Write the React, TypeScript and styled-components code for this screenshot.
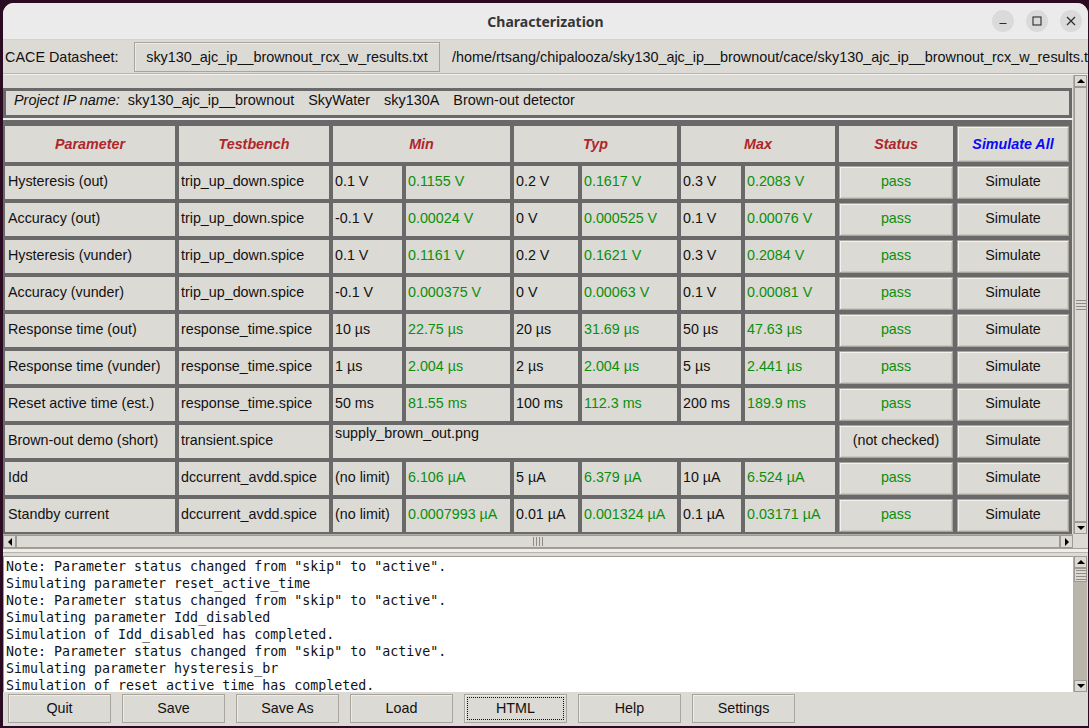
import React from "react";
import styled, { createGlobalStyle, css } from "styled-components";

const Global = createGlobalStyle`
  html, body { margin: 0; padding: 0; background: #2a0b21; }
  body {
    width: 1089px; height: 728px; overflow: hidden;
    font-family: "Liberation Sans", Arial, sans-serif;
  }
  #root { width: 1089px; height: 728px; }
`;

const Window = styled.div`
  margin: 3px 0 0 3px;
  width: 1085px;
  height: 723px;
  border-radius: 11px 11px 0 0;
  overflow: hidden;
  display: flex;
  flex-direction: column;
  background: #dcdad5;
`;

const TitleBar = styled.div`
  flex: 0 0 37px;
  box-sizing: border-box;
  display: grid;
  grid-template-columns: 1fr auto 1fr;
  align-items: center;
  background: #ebebeb;
  border-bottom: 1px solid #d2d2d2;
`;

const Title = styled.div`
  grid-column: 2;
  font-family: "Noto Sans", "DejaVu Sans", sans-serif;
  font-weight: 700;
  font-size: 14px;
  color: #363636;
  padding-top: 1px;
`;

const Controls = styled.div`
  grid-column: 3;
  justify-self: end;
  display: flex;
  gap: 12px;
  padding-right: 6px;
`;

const CtlBtn = styled.div`
  width: 22px;
  height: 22px;
  border-radius: 50%;
  background: #dadada;
  display: flex;
  align-items: center;
  justify-content: center;
`;

const DatasheetRow = styled.div`
  flex: 0 0 33px;
  display: flex;
  align-items: center;
  padding-left: 2px;
  font-size: 14.4px;
  color: #111;
  white-space: nowrap;
  overflow: hidden;
`;

const RowLabel = styled.div`
  flex: 0 0 129px;
`;

const FileButton = styled.div`
  flex: 0 0 306px;
  height: 30px;
  box-sizing: border-box;
  border: 1px solid #a9a59d;
  box-shadow: inset 1px 1px 0 #eeebe7;
  display: flex;
  align-items: center;
  justify-content: center;
  margin-right: 12px;
`;

const PathText = styled.div`
  flex: 1;
  overflow: hidden;
`;

const Rule = styled.div`
  flex: 0 0 2px;
  border-top: 1px solid #b9b6b0;
  box-sizing: border-box;
  background: #f2f1ef;
`;

const TableArea = styled.div`
  flex: 0 0 473px;
  min-height: 0;
  display: grid;
  grid-template-columns: 1070px 14px;
  grid-template-rows: 459px 14px;
`;

const Viewport = styled.div`
  overflow: hidden;
  display: flex;
  flex-direction: column;
  padding-top: 13px;
  box-sizing: border-box;
`;

const ProjectBox = styled.div`
  flex: 0 0 30px;
  width: 1069px;
  box-sizing: border-box;
  border: 3px solid #696969;
  display: flex;
  align-items: flex-start;
  padding: 1px 0 0 8px;
  font-size: 14.4px;
  color: #111;
  white-space: nowrap;
`;

const ProjLabel = styled.span`
  font-style: italic;
  margin-right: 8px;
`;

const ProjItem = styled.span`
  margin-right: 14px;
`;

const LightGap = styled.div`
  flex: 0 0 2px;
  background: #f0efec;
`;

const Grid = styled.div`
  width: 1069px;
  box-sizing: border-box;
  background: #696969;
  padding: 6px 3px 2px 2px;
  display: grid;
  grid-template-columns: 170px 150px 69px 104px 64px 95px 60px 90px 114px 112px;
  grid-template-rows: 36px repeat(10, 33px);
  gap: 4px;
`;

const Cell = styled.div<{ $span?: number; $center?: boolean; $top?: boolean; $tone?: "ok" | "head" | "all" }>`
  background: #dcdad5;
  box-sizing: border-box;
  display: flex;
  align-items: ${(p) => (p.$top ? "flex-start" : "center")};
  justify-content: ${(p) => (p.$center ? "center" : "flex-start")};
  padding-left: ${(p) => (p.$center ? "0" : "2px")};
  padding-bottom: ${(p) => (p.$top || p.$tone === "head" || p.$tone === "all" ? "0" : "3px")};
  font-size: 14.3px;
  color: #111;
  white-space: nowrap;
  overflow: hidden;
  ${(p) => p.$span && css`grid-column: span ${p.$span};`}
  ${(p) => p.$tone === "ok" && css`color: #0b8f0b;`}
  ${(p) =>
    p.$tone === "head" &&
    css`
      color: #b0262a;
      font-weight: 700;
      font-style: italic;
    `}
  ${(p) =>
    p.$tone === "all" &&
    css`
      color: #0a0af5;
      font-weight: 700;
      font-style: italic;
    `}
`;

const FirstCell = styled(Cell)`
  padding-left: 3px;
`;

const BtnCell = styled(Cell)`
  border: 1px solid #a9a59d;
  box-shadow: inset 1px 1px 0 #f3f2ef, inset -1px -1px 0 #c9c6bf;
`;

const VBar = styled.div<{ $trough?: string }>`
  display: flex;
  flex-direction: column;
  min-height: 0;
  background: ${(p) => p.$trough || "#dcdad5"};
  border-left: 1px solid #b3afa7;
  box-sizing: border-box;
`;

const HBar = styled.div`
  display: flex;
  background: #dcdad5;
  border-top: 1px solid #b3afa7;
  box-sizing: border-box;
`;

const ArrowBox = styled.div<{ $horiz?: boolean }>`
  flex: 0 0 ${(p) => (p.$horiz ? "13px" : "12px")};
  box-sizing: border-box;
  border: 1px solid #9e9a91;
  background: #dcdad5;
  display: flex;
  align-items: center;
  justify-content: center;
`;

const Thumb = styled.div<{ $size?: number; $horiz?: boolean }>`
  flex: ${(p) => (p.$size ? `0 0 ${p.$size}px` : "1")};
  box-sizing: border-box;
  border: 1px solid #9e9a91;
  background: #dcdad5;
  display: flex;
  flex-direction: ${(p) => (p.$horiz ? "row" : "column")};
  align-items: center;
  justify-content: center;
  gap: 2px;
`;

const Trough = styled.div`
  flex: 1;
`;

const GripLine = styled.div<{ $horiz?: boolean }>`
  ${(p) =>
    p.$horiz
      ? css`
          width: 1px;
          height: 9px;
        `
      : css`
          width: 10px;
          height: 1px;
        `}
  background: #8f8b84;
`;

const Corner = styled.div`
  background: #dcdad5;
`;

const Separator = styled.div`
  flex: 0 0 8px;
  box-sizing: border-box;
  border-top: 1px solid #a4a098;
  background: linear-gradient(#eeedea 0 3px, #b9b5ae 3px 4px, #dcdad5 4px);
`;

const ConsoleArea = styled.div`
  flex: 0 0 136px;
  min-height: 0;
  overflow: hidden;
  display: grid;
  grid-template-columns: 1070px 14px;
  grid-template-rows: 136px;
`;

const ConsoleText = styled.pre`
  margin: 0;
  min-height: 0;
  background: #ffffff;
  border-top: 1px solid #9e9a91;
  border-left: 1px solid #9e9a91;
  box-sizing: border-box;
  padding: 1px 0 0 2px;
  font-family: "DejaVu Sans Mono", "Liberation Mono", monospace;
  font-size: 13.3px;
  line-height: 17px;
  color: #111;
  overflow: hidden;
`;

const ButtonRow = styled.div`
  flex: 1;
  display: flex;
  gap: 11px;
  padding: 2px 0 0 5px;
`;

const PushButton = styled.div<{ $focus?: boolean }>`
  width: 103px;
  height: 29px;
  box-sizing: border-box;
  border: 1px solid #a9a59d;
  box-shadow: inset 1px 1px 0 #eeebe7;
  display: flex;
  align-items: center;
  justify-content: center;
  padding-bottom: 2px;
  font-size: 14.3px;
  color: #111;
  ${(p) =>
    p.$focus &&
    css`
      outline: 1px dotted #111;
      outline-offset: -4px;
    `}
`;

const Tri = ({ dir }: { dir: "up" | "down" | "left" | "right" }) => {
  const pts =
    dir === "up"
      ? "0,5 4,1 8,5"
      : dir === "down"
      ? "0,1 8,1 4,5"
      : dir === "left"
      ? "5,0 5,8 1,4"
      : "1,0 1,8 5,4";
  const w = dir === "up" || dir === "down" ? 8 : 6;
  const h = dir === "up" || dir === "down" ? 6 : 8;
  return (
    <svg width={w} height={h} viewBox={`0 0 ${w} ${h}`}>
      <polygon points={pts} fill="#000" />
    </svg>
  );
};

const Grip = ({ horiz }: { horiz?: boolean }) => (
  <>
    <GripLine $horiz={horiz} />
    <GripLine $horiz={horiz} />
    <GripLine $horiz={horiz} />
    <GripLine $horiz={horiz} />
  </>
);

type Row = {
  name: string;
  tb: string;
  vals?: string[];
  span?: string;
  status: string;
};

const rows: Row[] = [
  { name: "Hysteresis (out)", tb: "trip_up_down.spice", vals: ["0.1 V", "0.1155 V", "0.2 V", "0.1617 V", "0.3 V", "0.2083 V"], status: "pass" },
  { name: "Accuracy (out)", tb: "trip_up_down.spice", vals: ["-0.1 V", "0.00024 V", "0 V", "0.000525 V", "0.1 V", "0.00076 V"], status: "pass" },
  { name: "Hysteresis (vunder)", tb: "trip_up_down.spice", vals: ["0.1 V", "0.1161 V", "0.2 V", "0.1621 V", "0.3 V", "0.2084 V"], status: "pass" },
  { name: "Accuracy (vunder)", tb: "trip_up_down.spice", vals: ["-0.1 V", "0.000375 V", "0 V", "0.00063 V", "0.1 V", "0.00081 V"], status: "pass" },
  { name: "Response time (out)", tb: "response_time.spice", vals: ["10 µs", "22.75 µs", "20 µs", "31.69 µs", "50 µs", "47.63 µs"], status: "pass" },
  { name: "Response time (vunder)", tb: "response_time.spice", vals: ["1 µs", "2.004 µs", "2 µs", "2.004 µs", "5 µs", "2.441 µs"], status: "pass" },
  { name: "Reset active time (est.)", tb: "response_time.spice", vals: ["50 ms", "81.55 ms", "100 ms", "112.3 ms", "200 ms", "189.9 ms"], status: "pass" },
  { name: "Brown-out demo (short)", tb: "transient.spice", span: "supply_brown_out.png", status: "(not checked)" },
  { name: "Idd", tb: "dccurrent_avdd.spice", vals: ["(no limit)", "6.106 µA", "5 µA", "6.379 µA", "10 µA", "6.524 µA"], status: "pass" },
  { name: "Standby current", tb: "dccurrent_avdd.spice", vals: ["(no limit)", "0.0007993 µA", "0.01 µA", "0.001324 µA", "0.1 µA", "0.03171 µA"], status: "pass" },
];

const consoleLines = [
  'Note: Parameter status changed from "skip" to "active".',
  "Simulating parameter reset_active_time",
  'Note: Parameter status changed from "skip" to "active".',
  "Simulating parameter Idd_disabled",
  "Simulation of Idd_disabled has completed.",
  'Note: Parameter status changed from "skip" to "active".',
  "Simulating parameter hysteresis_br",
  "Simulation of reset_active_time has completed.",
];

const buttons = ["Quit", "Save", "Save As", "Load", "HTML", "Help", "Settings"];

export default function App() {
  return (
    <>
      <Global />
      <Window>
        <TitleBar>
          <Title>Characterization</Title>
          <Controls>
            <CtlBtn>
              <svg width="12" height="12" viewBox="0 0 12 12">
                <line x1="2.5" y1="8.5" x2="9.5" y2="8.5" stroke="#2d2d2d" strokeWidth="1.2" />
              </svg>
            </CtlBtn>
            <CtlBtn>
              <svg width="12" height="12" viewBox="0 0 12 12">
                <rect x="2" y="2" width="8" height="8" fill="none" stroke="#2d2d2d" strokeWidth="1.1" />
              </svg>
            </CtlBtn>
            <CtlBtn>
              <svg width="12" height="12" viewBox="0 0 12 12">
                <path d="M2 2 L10 10 M10 2 L2 10" stroke="#2d2d2d" strokeWidth="1.2" />
              </svg>
            </CtlBtn>
          </Controls>
        </TitleBar>

        <DatasheetRow>
          <RowLabel>CACE Datasheet:</RowLabel>
          <FileButton>sky130_ajc_ip__brownout_rcx_w_results.txt</FileButton>
          <PathText>/home/rtsang/chipalooza/sky130_ajc_ip__brownout/cace/sky130_ajc_ip__brownout_rcx_w_results.txt</PathText>
        </DatasheetRow>
        <Rule />

        <TableArea>
          <Viewport>
            <ProjectBox>
              <ProjLabel>Project IP name:</ProjLabel>
              <ProjItem>sky130_ajc_ip__brownout</ProjItem>
              <ProjItem>SkyWater</ProjItem>
              <ProjItem>sky130A</ProjItem>
              <ProjItem>Brown-out detector</ProjItem>
            </ProjectBox>
            <LightGap />
            <Grid>
              <Cell $center $tone="head">Parameter</Cell>
              <Cell $center $tone="head">Testbench</Cell>
              <Cell $center $span={2} $tone="head">Min</Cell>
              <Cell $center $span={2} $tone="head">Typ</Cell>
              <Cell $center $span={2} $tone="head">Max</Cell>
              <Cell $center $tone="head">Status</Cell>
              <BtnCell $center $tone="all">Simulate All</BtnCell>
              {rows.map((r) => (
                <React.Fragment key={r.name}>
                  <FirstCell>{r.name}</FirstCell>
                  <Cell>{r.tb}</Cell>
                  {r.vals ? (
                    r.vals.map((v, i) => (
                      <Cell key={i} $tone={i % 2 === 1 ? "ok" : undefined}>
                        {v}
                      </Cell>
                    ))
                  ) : (
                    <Cell $span={6} $top>
                      {r.span}
                    </Cell>
                  )}
                  <BtnCell $center $tone={r.status === "pass" ? "ok" : undefined}>
                    {r.status}
                  </BtnCell>
                  <BtnCell $center>Simulate</BtnCell>
                </React.Fragment>
              ))}
            </Grid>
          </Viewport>
          <VBar>
            <ArrowBox>
              <Tri dir="up" />
            </ArrowBox>
            <Thumb>
              <Grip />
            </Thumb>
            <ArrowBox>
              <Tri dir="down" />
            </ArrowBox>
          </VBar>
          <HBar>
            <ArrowBox $horiz>
              <Tri dir="left" />
            </ArrowBox>
            <Thumb $horiz>
              <Grip horiz />
            </Thumb>
            <ArrowBox $horiz>
              <Tri dir="right" />
            </ArrowBox>
          </HBar>
          <Corner />
        </TableArea>

        <Separator />

        <ConsoleArea>
          <ConsoleText>{consoleLines.join("\n")}</ConsoleText>
          <VBar $trough="#bab5ab">
            <ArrowBox>
              <Tri dir="up" />
            </ArrowBox>
            <Thumb $size={14}>
              <Grip />
            </Thumb>
            <Trough />
            <ArrowBox>
              <Tri dir="down" />
            </ArrowBox>
          </VBar>
        </ConsoleArea>

        <ButtonRow>
          {buttons.map((b) => (
            <PushButton key={b} $focus={b === "HTML"}>
              {b}
            </PushButton>
          ))}
        </ButtonRow>
      </Window>
    </>
  );
}
